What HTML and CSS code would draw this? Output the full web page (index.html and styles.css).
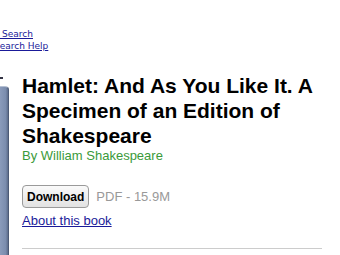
FILE: index.html
```html
<!DOCTYPE html>
<html lang="en">
<head>
    <meta charset="UTF-8">
    <title>Hamlet: And As You Like It</title>
    <link rel="stylesheet" href="styles.css">
</head>
<body>

<div class="search-links">
    <a href="#" class="search-link">k Search</a>
    <a href="#" class="search-link">Search Help</a>
</div>

<div class="book">
    <div class="cover-col">
        <span class="cover-mark"></span>
        <div class="cover"></div>
    </div>
    <div class="book-info">
        <h1 class="book-title">Hamlet: And As You Like It. A Specimen of an Edition of Shakespeare</h1>
        <div class="book-author">By William Shakespeare</div>
        <div class="download-row">
            <button class="download-btn">Download</button>
            <span class="file-info">PDF - 15.9M</span>
        </div>
        <a href="#" class="about-link">About this book</a>
        <hr class="divider">
    </div>
</div>

</body>
</html>
```

FILE: styles.css
```css
/* Global Styles */
body {
    margin: 0;
    padding: 0;
    background-color: #fff;
    font-family: 'Liberation Sans', Arial, sans-serif;
    color: #000;
    overflow: hidden;
}

a {
    color: #1a1a99;
}

/* Search links (cut off at the left) */
.search-links {
    padding-top: 28px;
    display: flex;
    flex-direction: column;
    overflow: hidden;
}

.search-link {
    font-family: 'DejaVu Sans', sans-serif;
    font-size: 9px;
    line-height: 12px;
    white-space: nowrap;
    margin-left: -6px;
}

/* Book block */
.book {
    display: flex;
    margin-top: 21px;
}

.cover-col {
    width: 22px;
    flex-shrink: 0;
    display: flex;
    flex-direction: column;
}

.cover-mark {
    display: block;
    width: 3px;
    height: 2px;
    background-color: #334;
    margin-top: 4px;
}

.cover {
    width: 9px;
    height: 200px;
    margin-top: 7px;
    box-sizing: border-box;
    background: linear-gradient(to right, #8a9bbb, #7b8dae 70%, #5d6d8c);
    border: 1px solid #b5c0d3;
    border-left: none;
    border-right: 1px solid #4c5a76;
    border-top-right-radius: 4px;
}

.book-info {
    width: 300px;
}

.book-title {
    font-size: 21px;
    font-weight: bold;
    line-height: 25px;
    margin: 0;
}

.book-author {
    font-size: 13px;
    color: #3a9a3a;
}

.download-row {
    display: flex;
    align-items: center;
    margin-top: 22px;
}

.download-btn {
    font-family: 'Liberation Sans', Arial, sans-serif;
    font-size: 12px;
    font-weight: bold;
    color: #000;
    height: 23px;
    padding: 0 4px;
    border: 1px solid #9a9a9a;
    border-radius: 4px;
    background: linear-gradient(#fafafa, #e2e2e2);
}

.file-info {
    font-size: 13px;
    color: #999;
    margin-left: 7px;
}

.about-link {
    display: inline-block;
    font-size: 13px;
    margin-top: 5px;
}

.divider {
    border: none;
    border-top: 1px solid #ccc;
    margin: 19px 0 0 0;
}
```
